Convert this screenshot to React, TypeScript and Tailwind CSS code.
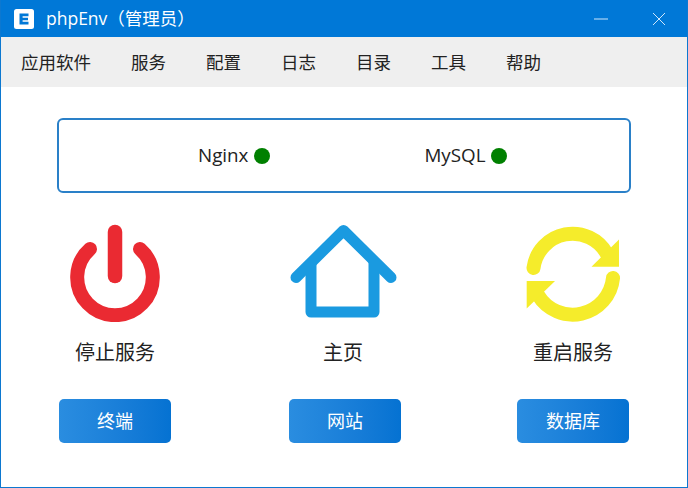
import React from "react";

const font = { fontFamily: '"Open Sans", "Noto Sans CJK SC", sans-serif' };

function Power() {
  return (
    <svg width="100" height="100" viewBox="65 222 100 100" fill="none" stroke="#ea2a32" strokeLinecap="round">
      <path d="M90 249 A37.8 37.8 0 1 0 140 249" strokeWidth="14" />
      <path d="M115 232 V276" strokeWidth="14.5" />
    </svg>
  );
}

function Home() {
  return (
    <svg width="116" height="100" viewBox="287 222 116 100" fill="none" stroke="#1a9ae0" strokeLinejoin="round">
      <path d="M296 277.5 L343.5 230.5 L391 277.5" strokeWidth="11" strokeLinecap="round" />
      <path d="M311 262 V312 H374 V262" strokeWidth="11" />
    </svg>
  );
}

function Sync() {
  return (
    <svg width="100" height="100" viewBox="523 222 100 100" fill="none">
      <path d="M533.5 268 A39.4 39.4 0 0 1 607 254" stroke="#f5ec2b" strokeWidth="14" strokeLinecap="round" />
      <path d="M619 239.5 V266.7 H591.5 Z" fill="#f5ec2b" />
      <path d="M613 278 A40.5 40.5 0 0 1 538 295" stroke="#f5ec2b" strokeWidth="14" strokeLinecap="round" />
      <path d="M526.7 281 H555 L526.7 308.5 Z" fill="#f5ec2b" />
    </svg>
  );
}

function Column({ icon, label, button, labelClass = "" }: { icon: React.ReactNode; label: string; button: string; labelClass?: string }) {
  return (
    <div className="flex w-[112px] flex-col items-center">
      <div className="flex h-[100px] items-center justify-center">{icon}</div>
      <div className={`mt-[18px] h-[26px] whitespace-nowrap text-[20px] leading-[26px] text-[#222222] ${labelClass}`}>{label}</div>
      <button className="mt-[33px] h-[44px] w-[112px] rounded-[5px] bg-gradient-to-r from-[#2a8de0] to-[#0572d2] text-[18px] text-white">
        {button}
      </button>
    </div>
  );
}

export default function App() {
  return (
    <div style={font} className="flex h-[488px] w-[688px] flex-col overflow-hidden border-x border-b border-[#0c78d0] bg-white">
      <div className="flex h-[37px] shrink-0 items-center bg-[#0078d7] pl-[13px] text-white">
        <svg width="20" height="20" viewBox="0 0 20 20" className="shrink-0">
          <rect width="20" height="20" rx="2.5" fill="#fff" />
          <path d="M5.5 4.5 H14.5 V7.2 H8.6 V8.8 H14 V11.2 H8.6 V12.8 H14.5 V15.5 H5.5 Z" fill="#0078d7" />
        </svg>
        <span className="ml-[12px] text-[17.5px] leading-none">phpEnv（管理员）</span>
        <svg width="14" height="14" viewBox="0 0 14 14" className="ml-auto mr-[44px]" stroke="#cfe6fa" strokeWidth="1">
          <path d="M0 7 H14" />
        </svg>
        <svg width="14" height="14" viewBox="0 0 14 14" className="mr-[21px]" stroke="#cfe6fa" strokeWidth="1">
          <path d="M1 1 L13 13 M13 1 L1 13" />
        </svg>
      </div>
      <div className="flex h-[50px] shrink-0 items-center gap-[40px] bg-[#efefef] pl-[20px] text-[17.5px] text-[#222222]">
        <span>应用软件</span>
        <span>服务</span>
        <span>配置</span>
        <span>日志</span>
        <span>目录</span>
        <span>工具</span>
        <span>帮助</span>
      </div>
      <div className="mx-[56px] mt-[31px] flex h-[75px] shrink-0 items-center rounded-[6px] border-2 border-[#2a80c8] pl-[139px] text-[18.8px] text-[#222222]">
        <span>Nginx</span>
        <span className="ml-[6px] h-[16px] w-[16px] rounded-full bg-[#008000]" />
        <span className="ml-[154px]">MySQL</span>
        <span className="ml-[6px] h-[16px] w-[16px] rounded-full bg-[#008000]" />
      </div>
      <div className="mt-[29px] flex pl-[58px]">
        <Column icon={<Power />} label="停止服务" button="终端" />
        <div className="ml-[118px]">
          <Column icon={<Home />} label="主页" button="网站" labelClass="mr-[4px]" />
        </div>
        <div className="ml-[116px]">
          <Column icon={<Sync />} label="重启服务" button="数据库" />
        </div>
      </div>
    </div>
  );
}
